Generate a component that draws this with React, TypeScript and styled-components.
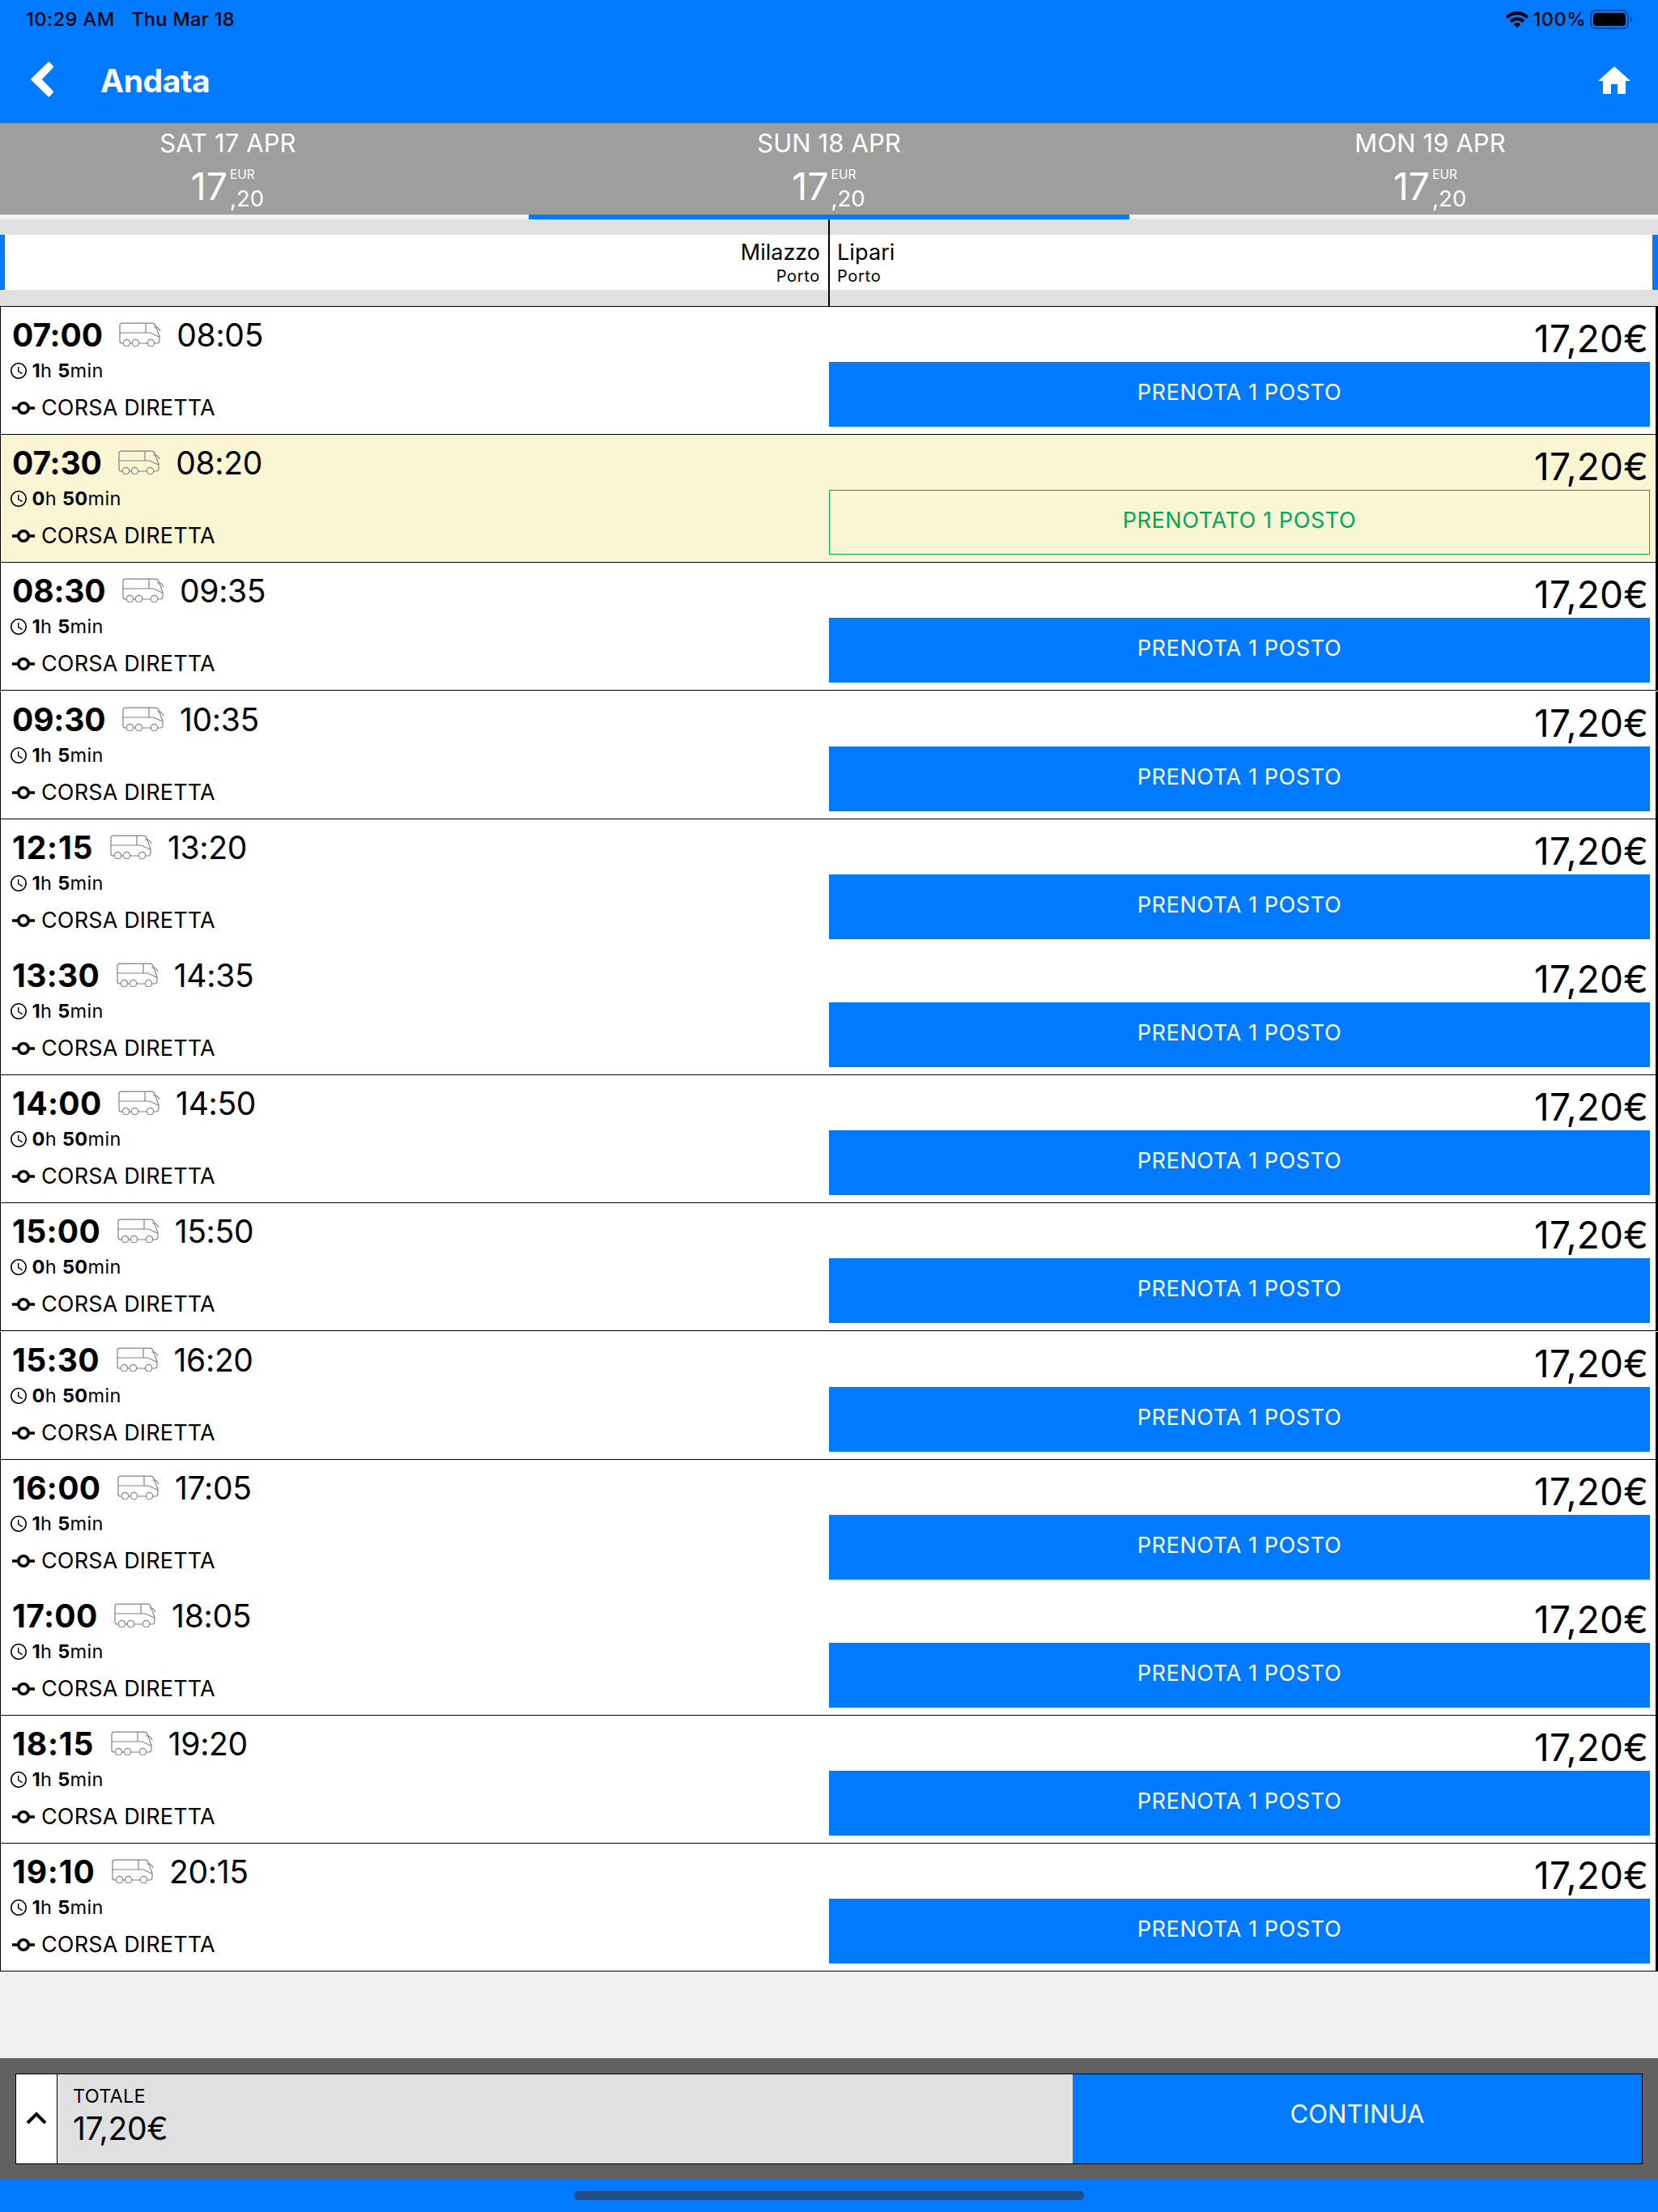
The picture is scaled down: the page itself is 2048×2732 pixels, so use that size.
import React from "react";
import styled, { createGlobalStyle, css } from "styled-components";

const BLUE = "#007aff";

const GlobalStyle = createGlobalStyle`
  * { box-sizing: border-box; }
  html, body { margin: 0; padding: 0; background: #f1f1f1; }
  body { font-family: Inter, "Liberation Sans", sans-serif; color: #000; }
  button { font-family: inherit; }
`;

const Screen = styled.div`
  width: 2048px;
  height: 2732px;
  display: flex;
  flex-direction: column;
  overflow: hidden;
  background: #f1f1f1;
`;

const Text = styled.span<{ $size: number; $weight?: number; $track?: number; $line?: number }>`
  font-size: ${(p) => p.$size}px;
  font-weight: ${(p) => p.$weight ?? 380};
  letter-spacing: ${(p) => p.$track ?? 0}px;
  line-height: ${(p) => (p.$line ? `${p.$line}px` : "normal")};
  white-space: nowrap;
`;

const StatusBar = styled.div`
  height: 48px;
  padding: 0 30px 1px 32px;
  background: ${BLUE};
  display: flex;
  align-items: center;
  justify-content: space-between;
`;

const StatusGroup = styled.div<{ $gap: number }>`
  display: flex;
  align-items: center;
  gap: ${(p) => p.$gap}px;
`;

const Header = styled.header`
  height: 104px;
  padding: 0 30px 0 36px;
  background: ${BLUE};
  color: #fff;
  display: flex;
  align-items: center;
`;

const Title = styled.h1`
  flex: 1;
  margin: 0 0 0 56px;
  font-size: 39px;
  font-weight: 700;
  letter-spacing: -0.4px;
  line-height: 48px;
`;

const IconButton = styled.button<{ $raise?: number }>`
  display: flex;
  margin-bottom: ${(p) => p.$raise ?? 0}px;
  padding: 0;
  border: 0;
  background: none;
  color: inherit;
`;

const Tabs = styled.nav`
  height: 119px;
  display: flex;
  justify-content: center;
`;

const Tab = styled.div<{ $active?: boolean }>`
  flex: 0 0 742.6px;
  height: 119px;
  padding-top: 6px;
  display: flex;
  flex-direction: column;
  align-items: center;
  background: #9e9e9e;
  color: #fff;
  border-bottom: 6px solid ${(p) => (p.$active ? BLUE : "#f1f1f1")};
`;

const Fare = styled.div`
  display: flex;
  height: 60px;
  margin-right: 1px;
`;

const FareCents = styled.div`
  display: flex;
  flex-direction: column;
  margin-left: 3px;
  padding-top: 8px;
`;

const Route = styled.section`
  height: 107px;
  display: flex;
  padding: 19px 0 20px;
  background: #e0e0e0;
  position: relative;
  &::after {
    content: "";
    position: absolute;
    top: 0;
    bottom: 0;
    left: 1023px;
    width: 2px;
    background: #000;
  }
`;

const Stop = styled.div<{ $side: "from" | "to" }>`
  width: 1024px;
  padding: 4px 11px 0 10px;
  display: flex;
  flex-direction: column;
  background: #fff;
  ${(p) =>
    p.$side === "from"
      ? css`
          align-items: flex-end;
          border-left: 6px solid ${BLUE};
        `
      : css`
          align-items: flex-start;
          border-right: 7px solid ${BLUE};
        `}
`;

const List = styled.main`
  border-top: 1px solid #000;
`;

const Row = styled.article<{ $booked?: boolean; $line: boolean; $gap?: boolean }>`
  height: 158px;
  display: flex;
  justify-content: space-between;
  margin-bottom: ${(p) => (p.$gap ? 1 : 0)}px;
  padding-right: 7px;
  background: ${(p) => (p.$booked ? "#faf5d3" : "#fff")};
  border-left: 1px solid #000;
  border-right: 3px solid #000;
  box-shadow: ${(p) => (p.$line ? "inset 0 -1px #000" : "none")};
`;

const Trip = styled.div`
  padding-top: 10px;
`;

const Times = styled.div`
  height: 50px;
  padding-left: 14px;
  display: flex;
  align-items: center;
`;

const BusIcon = styled.svg`
  width: 52px;
  height: 30px;
  margin: 0 19px 2px 20.5px;
`;

const Duration = styled.div`
  height: 37px;
  padding-left: 10px;
  display: flex;
  align-items: center;
  gap: 4.5px;
  b { font-weight: 700; }
`;

const Stops = styled.div`
  height: 55px;
  padding-left: 14px;
  display: flex;
  align-items: center;
  gap: 8px;
`;

const Booking = styled.div`
  width: 1014px;
  padding-top: 10px;
  display: flex;
  flex-direction: column;
`;

const Price = styled.div`
  height: 58px;
  padding-right: 2px;
  display: flex;
  justify-content: flex-end;
`;

const BookButton = styled.button<{ $booked?: boolean }>`
  height: 80px;
  padding: 0 0 5px;
  border: 0;
  background: ${(p) => (p.$booked ? "transparent" : BLUE)};
  box-shadow: ${(p) => (p.$booked ? "inset 0 0 0 1px #00a65a" : "none")};
  color: ${(p) => (p.$booked ? "#00a65a" : "#fff")};
`;

const Spacer = styled.div`
  flex: 1;
`;

const Footer = styled.footer`
  height: 150px;
  padding: 19px;
  background: #616161;
`;

const Summary = styled.div`
  height: 112px;
  display: flex;
  border: 1px solid #000;
  background: #e0e0e0;
`;

const Expand = styled.button`
  width: 51px;
  padding: 0 0 3px;
  display: flex;
  align-items: center;
  justify-content: center;
  border: 0;
  border-right: 1px solid #000;
  background: #fff;
`;

const Total = styled.div`
  flex: 1;
  padding: 10px 0 0 19px;
  display: flex;
  flex-direction: column;
`;

const Continue = styled.button`
  width: 703px;
  padding: 0 0 13px;
  border: 0;
  background: ${BLUE};
  color: #fff;
`;

const HomeArea = styled.div`
  height: 40px;
  padding-top: 14px;
  background: ${BLUE};
`;

const HomeIndicator = styled.div`
  width: 630px;
  height: 11px;
  margin: 0 auto;
  border-radius: 6px;
  background: #1d4f8a;
`;

const Bus = () => (
  <BusIcon viewBox="0 0 52 30" fill="none" stroke="#808084" strokeWidth="1.2">
    <path d="M5 26H3.5Q1 26 1 23V4Q1 1.2 4 1.2H41Q44 1.2 45 4L50 17.5V22Q50 26 47 26H44" />
    <path d="M1 13H38.5L50 18.2M33 1.2V13M14 26H16M25 26H35M43 6H46.5Q49.5 7 51 11" />
    <circle cx="9.5" cy="25.6" r="4.2" />
    <circle cx="20.5" cy="25.6" r="4.2" />
    <circle cx="39.5" cy="25.6" r="4.2" />
  </BusIcon>
);

const Clock = () => (
  <svg width="24" height="24" viewBox="0 0 24 24">
    <path d="M11.99 2C6.47 2 2 6.48 2 12s4.47 10 9.99 10C17.52 22 22 17.52 22 12S17.52 2 11.99 2zM12 20.4A8.4 8.4 0 1 1 12 3.6a8.4 8.4 0 0 1 0 16.8z" />
    <path d="M12.4 7H11v6l5.2 3.15.75-1.2-4.55-2.7z" />
  </svg>
);

const Commit = () => (
  <svg width="28" height="18" viewBox="0 0 28 18" fill="none" stroke="#000" strokeWidth="3.6">
    <circle cx="14" cy="9" r="6.2" />
    <path d="M0 9H7M21 9H28" />
  </svg>
);

const days = [
  { label: "SAT 17 APR" },
  { label: "SUN 18 APR", active: true },
  { label: "MON 19 APR" },
];

type TripData = { from: string; to: string; h: number; min: number; booked?: boolean; line?: boolean; gap?: boolean };

const trips: TripData[] = [
  { from: "07:00", to: "08:05", h: 1, min: 5 },
  { from: "07:30", to: "08:20", h: 0, min: 50, booked: true },
  { from: "08:30", to: "09:35", h: 1, min: 5, gap: true },
  { from: "09:30", to: "10:35", h: 1, min: 5 },
  { from: "12:15", to: "13:20", h: 1, min: 5, line: false },
  { from: "13:30", to: "14:35", h: 1, min: 5 },
  { from: "14:00", to: "14:50", h: 0, min: 50 },
  { from: "15:00", to: "15:50", h: 0, min: 50, gap: true },
  { from: "15:30", to: "16:20", h: 0, min: 50 },
  { from: "16:00", to: "17:05", h: 1, min: 5, line: false },
  { from: "17:00", to: "18:05", h: 1, min: 5 },
  { from: "18:15", to: "19:20", h: 1, min: 5 },
  { from: "19:10", to: "20:15", h: 1, min: 5 },
];

const departureTrack = (time: string) => -0.15 + 0.5 * (time.split("1").length - 1);

export default function App() {
  return (
    <Screen>
      <GlobalStyle />
      <StatusBar>
        <StatusGroup $gap={20.5}>
          <Text $size={23.5} $weight={480} $track={0.5}>10:29 AM</Text>
          <Text $size={23.5} $weight={480} $track={0.3}>Thu Mar 18</Text>
        </StatusGroup>
        <StatusGroup $gap={5}>
          <svg width="30" height="22" viewBox="0 0 30 22">
            <g fill="none" stroke="#000" strokeWidth="4">
              <path d="M2.2 8.6a18.2 18.2 0 0 1 25.6 0" />
              <path d="M7 13.6a11.4 11.4 0 0 1 16 0" />
            </g>
            <path d="M15 21.2l-4.3-4.4a6.2 6.2 0 0 1 8.6 0z" />
          </svg>
          <Text $size={23.5} $weight={450} $track={0.5}>100%</Text>
          <svg width="54" height="24" viewBox="0 0 54 24">
            <rect x="1" y="1" width="46" height="22" rx="6.5" fill="none" stroke="#000" strokeOpacity="0.4" strokeWidth="2" />
            <rect x="4" y="4" width="40" height="16" rx="4" />
            <path d="M50 8a4.5 4.5 0 0 1 0 8z" fillOpacity="0.4" />
          </svg>
        </StatusGroup>
      </StatusBar>
      <Header>
        <IconButton $raise={4}>
          <svg width="32" height="46" viewBox="0 0 32 46" fill="#fff" stroke="#fff" strokeWidth="2.4" strokeLinejoin="round">
            <path d="M3.3 23L24.3 2.6 28.8 7.6 14.2 23 28.8 38.4 24.3 43.4z" />
          </svg>
        </IconButton>
        <Title>Andata</Title>
        <IconButton>
          <svg width="48" height="48" viewBox="0 0 24 24" fill="#fff">
            <path d="M10 20v-6h4v6h5v-8h3L12 3 2 12h3v8z" />
          </svg>
        </IconButton>
      </Header>
      <Tabs>
        {days.map((d) => (
          <Tab key={d.label} $active={d.active}>
            <Text $size={31} $line={38} $track={0.1}>{d.label}</Text>
            <Fare>
              <Text $size={46.5} $line={69} $weight={380}>17</Text>
              <FareCents>
                <Text $size={15.5} $line={23} $weight={380}>EUR</Text>
                <Text $size={27.5} $line={36} $weight={380}>,20</Text>
              </FareCents>
            </Fare>
          </Tab>
        ))}
      </Tabs>
      <Route>
        <Stop $side="from">
          <Text $size={27} $line={36}>Milazzo</Text>
          <Text $size={20} $line={23} $track={0.7}>Porto</Text>
        </Stop>
        <Stop $side="to">
          <Text $size={27} $line={36} $track={0.1}>Lipari</Text>
          <Text $size={20} $line={23} $track={0.7}>Porto</Text>
        </Stop>
      </Route>
      <List>
        {trips.map((t) => (
          <Row key={t.from} $booked={t.booked} $line={t.line !== false} $gap={t.gap}>
            <Trip>
              <Times>
                <Text $size={39} $line={50} $weight={700} $track={departureTrack(t.from)}>{t.from}</Text>
                <Bus />
                <Text $size={39} $line={50} $track={-0.3}>{t.to}</Text>
              </Times>
              <Duration>
                <Clock />
                <Text $size={23.5} $track={0.35}>
                  <b>{t.h}</b>h <b>{t.min}</b>min
                </Text>
              </Duration>
              <Stops>
                <Commit />
                <Text $size={27} $track={0.15}>CORSA DIRETTA</Text>
              </Stops>
            </Trip>
            <Booking>
              <Price>
                <Text $size={46} $line={58} $track={0.15}>17,20€</Text>
              </Price>
              <BookButton $booked={t.booked}>
                <Text $size={27} $weight={440} $track={0.6}>{t.booked ? "PRENOTATO 1 POSTO" : "PRENOTA 1 POSTO"}</Text>
              </BookButton>
            </Booking>
          </Row>
        ))}
      </List>
      <Spacer />
      <Footer>
        <Summary>
          <Expand>
            <svg width="26" height="16" viewBox="0 0 26 16" fill="none" stroke="#000" strokeWidth="4">
              <path d="M2 14L13 3 24 14" />
            </svg>
          </Expand>
          <Total>
            <Text $size={23.5} $line={34} $track={0.2}>TOTALE</Text>
            <Text $size={39} $line={46} $track={-0.25}>17,20€</Text>
          </Total>
          <Continue>
            <Text $size={31} $weight={440} $track={0.1}>CONTINUA</Text>
          </Continue>
        </Summary>
      </Footer>
      <HomeArea>
        <HomeIndicator />
      </HomeArea>
    </Screen>
  );
}
